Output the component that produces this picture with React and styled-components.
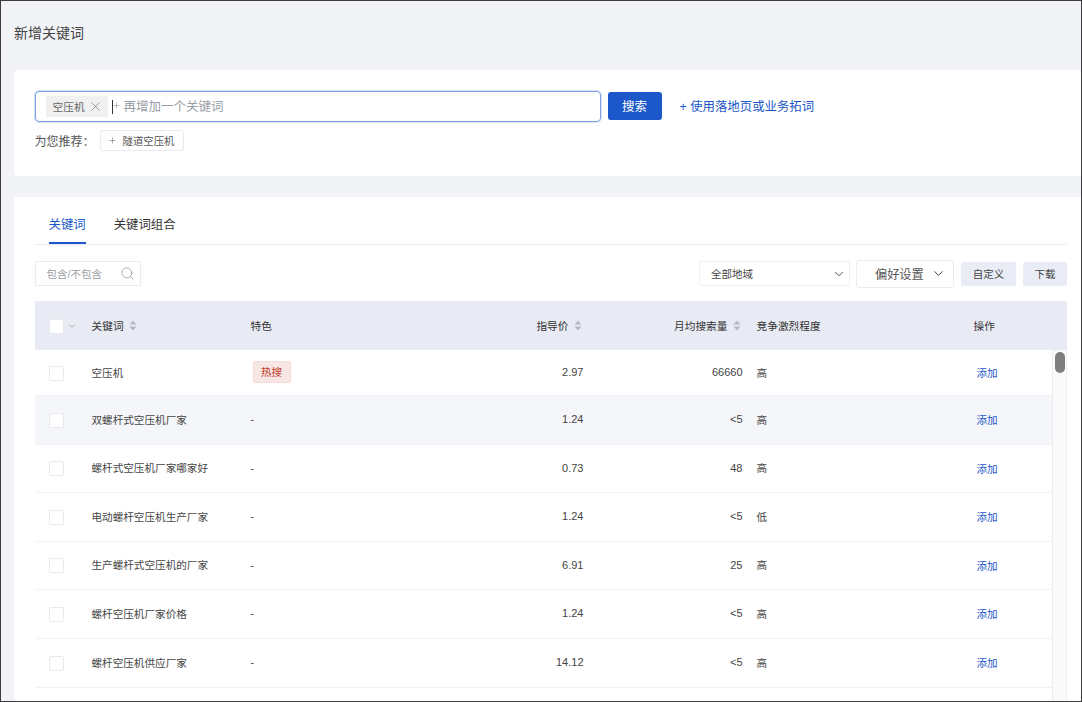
import React from "react";
import styled, { createGlobalStyle } from "styled-components";
import { X, ChevronDown, Search, Plus } from "lucide-react";

const Global = createGlobalStyle`
  html, body { margin: 0; padding: 0; height: 100%; overflow: hidden; }
  body { font-family: "Liberation Sans", "Noto Sans CJK SC", sans-serif; color: #333; }
  * { box-sizing: border-box; }
`;

const Frame = styled.div`
  width: 1082px; height: 702px; overflow: hidden; background: #f1f3f7;
  border: 1px solid #3c3c3e; border-left-width: 1.5px;
  display: flex; flex-direction: column; padding-left: 12.5px;
`;
const Title = styled.h1`
  margin: 0; height: 69px; padding: 22px 0 0 0.5px; font-size: 14px; line-height: 20px; font-weight: 400; color: #444;
`;
const Card = styled.section`
  background: #fff; border-radius: 4px 0 0 4px; padding-left: 21px;
`;
const SearchCard = styled(Card)`
  height: 106px; padding-top: 21px; margin-bottom: 21px;
`;
const SearchRow = styled.div`display: flex; align-items: center; height: 31px;`;
const InputBox = styled.div`
  width: 566px; height: 31px; border: 1px solid #7d9ce6; border-radius: 4px; box-shadow: 0 0 0 1px #dde6f9;
  display: flex; align-items: center; padding-left: 10px;
`;
const Tag = styled.span`
  width: 62px; height: 21px; background: #f0f0f1; display: flex; align-items: center; gap: 3px;
  padding-left: 7px; font-size: 10.7px; color: #666; flex: none;
  svg { color: #666; }
`;
const Caret = styled.span`width: 1px; height: 14px; background: #333; margin-left: 4px; flex: none;`;
const Placeholder = styled.span`
  font-size: 12.5px; color: #9a9ea6; display: flex; align-items: center; gap: 3px; margin-left: -1px; position: relative; top: -1px;
  svg { color: #777; }
`;
const PrimaryButton = styled.button`
  width: 54px; height: 28px; margin-left: 7px; border: 0; border-radius: 3px; background: #1c58c9; color: #fff;
  font: inherit; font-size: 12.5px; padding: 0; position: relative; top: -1px;
`;
const LinkText = styled.a`margin-left: 18px; font-size: 12.4px; color: #1c58c9; position: relative; top: -1px;`;
const RecommendRow = styled.div`display: flex; align-items: center; height: 21px; margin-top: 8px; font-size: 12px; color: #555;`;
const Chip = styled.span`
  width: 84px; height: 21px; margin-left: 5px; border: 1px solid #e8eaf1; border-radius: 3px; display: flex; align-items: center;
  padding-left: 7px; gap: 6px; font-size: 10.4px; color: #555;
`;

const MainCard = styled(Card)`flex: 1; padding-right: 14px; min-height: 0;`;
const Tabs = styled.div`height: 48px; border-bottom: 1px solid #e7eaf1; display: flex; padding-left: 14px; gap: 28px;`;
const Tab = styled.div`
  height: 47px; padding-top: 19px; font-size: 12.4px; line-height: 18px;
  color: ${p => (p.$active ? "#1c58c9" : "#333")};
  border-bottom: 2px solid ${p => (p.$active ? "#1c58c9" : "transparent")};
`;
const Toolbar = styled.div`height: 56px; display: flex; align-items: center; padding-top: 1px;`;
const FilterBox = styled.div`
  width: 106px; height: 25px; border: 1px solid #e9ebf2; display: flex; align-items: center; justify-content: space-between;
  padding: 0 5px 0 11px; font-size: 10.5px; color: #9a9ea6;
  svg { color: #8d9198; }
`;
const Spacer = styled.div`flex: 1;`;
const SelectBox = styled.div`
  width: 151px; height: 25px; border: 1px solid #eef0f5; border-radius: 2px; display: flex; align-items: center; justify-content: space-between;
  padding: 0 3px 0 11px; font-size: 10.5px; color: #444;
  svg { color: #333; }
`;
const PrefButton = styled.div`
  width: 98px; height: 28px; margin-left: 6px; border: 1px solid #eaecf2; border-radius: 3px; display: flex; align-items: center;
  padding-left: 18px; gap: 7px; font-size: 12.2px; color: #555;
  svg { color: #333; }
`;
const SoftButton = styled.div`
  width: ${p => p.$w}px; height: 24px; margin-left: ${p => p.$ml}px; background: #e9ecf4; border-radius: 2px;
  display: flex; align-items: center; justify-content: center; font-size: 10.5px; color: #444;
`;

const grid = `display: grid; grid-template-columns: 57px 159px 149px 184px 159px 231px 1fr; align-items: center;`;
const HeadRow = styled.div`
  ${grid} height: 49px; background: #e8ebf3; font-size: 10.7px; color: #333; border-radius: 2px 2px 0 0;
`;
const HeadCell = styled.div`
  display: flex; align-items: center; gap: 5px;
  justify-content: ${p => (p.$right ? "flex-end" : "flex-start")};
  padding-left: ${p => (p.$pl ? p.$pl : 0)}px;
  padding-right: ${p => (p.$right ? 2 : 0)}px;
`;
const CheckCell = styled.div`display: flex; align-items: center; padding-left: 14px; gap: 3px; svg { color: #6f737a; }`;
const HeadCheckCell = styled(CheckCell)`padding-top: 1px;`;
const Check = styled.span`
  display: block; width: 15px; height: 15px; border: 1px solid #e8eaf1; border-radius: 2px; background: #fff;
`;
const BodyWrap = styled.div`display: flex; height: 400px;`;
const Rows = styled.div`flex: 1; min-width: 0; padding-top: 1px;`;
const Row = styled.div`
  ${grid} height: ${p => p.$h}px; font-size: 10.6px; color: #444;
  background: ${p => (p.$hover ? "#f5f6fa" : "#fff")};
  border-bottom: 1px solid #f1f2f5;
`;
const Cell = styled.div`padding-bottom: 2px;`;
const Right = styled(Cell)`text-align: right; font-size: 11px;`;
const Comp = styled(Cell)`padding-left: 14px;`;
const Add = styled.a`padding-left: 3px; color: #1c58c9; padding-bottom: 1px;`;
const HotBadge = styled.span`
  display: inline-block; width: 38px; height: 22px; margin-left: 2px; line-height: 21px; text-align: center;
  background: #f8e6e4; border: 1px solid #f3dedb; border-radius: 2px; color: #c0392b; font-size: 10.5px;
`;
const Track = styled.div`
  width: 15px; flex: none; background: #fafafa; border-left: 1px solid #ededed; border-right: 1px solid #f0f0f0; padding: 2px 0 0 2px;
`;
const Thumb = styled.div`width: 10px; height: 21px; background: #7f7f7f; border-radius: 5px;`;

const Sort = () => (
  <svg width="8" height="11" viewBox="0 0 8 11" fill="#b4b9c6"><path d="M4 0.5 7.5 4.5H.5zM4 10.5 .5 6.5h7z" /></svg>
);

const rows = [
  ["空压机", true, "2.97", "66660", "高", 45],
  ["双螺杆式空压机厂家", false, "1.24", "<5", "高", 49],
  ["螺杆式空压机厂家哪家好", false, "0.73", "48", "高", 48],
  ["电动螺杆空压机生产厂家", false, "1.24", "<5", "低", 49],
  ["生产螺杆式空压机的厂家", false, "6.91", "25", "高", 48],
  ["螺杆空压机厂家价格", false, "1.24", "<5", "高", 49],
  ["螺杆空压机供应厂家", false, "14.12", "<5", "高", 49],
];

export default function App() {
  return (
    <Frame>
      <Global />
      <Title>新增关键词</Title>
      <SearchCard>
        <SearchRow>
          <InputBox>
            <Tag>空压机<X size={15} strokeWidth={1} /></Tag>
            <Caret />
            <Placeholder><Plus size={9} strokeWidth={1.3} />再增加一个关键词</Placeholder>
          </InputBox>
          <PrimaryButton>搜索</PrimaryButton>
          <LinkText>+ 使用落地页或业务拓词</LinkText>
        </SearchRow>
        <RecommendRow>
          为您推荐：
          <Chip><Plus size={9} strokeWidth={1.3} />隧道空压机</Chip>
        </RecommendRow>
      </SearchCard>
      <MainCard>
        <Tabs>
          <Tab $active>关键词</Tab>
          <Tab>关键词组合</Tab>
        </Tabs>
        <Toolbar>
          <FilterBox>包含/不包含<Search size={15} strokeWidth={1.2} /></FilterBox>
          <Spacer />
          <SelectBox>全部地域<ChevronDown size={14} strokeWidth={1.5} /></SelectBox>
          <PrefButton>偏好设置<ChevronDown size={15} strokeWidth={1.5} /></PrefButton>
          <SoftButton $w={55} $ml={7}>自定义</SoftButton>
          <SoftButton $w={44} $ml={7}>下载</SoftButton>
        </Toolbar>
        <HeadRow>
          <HeadCheckCell><Check /><ChevronDown size={10} strokeWidth={1.3} /></HeadCheckCell>
          <HeadCell>关键词<Sort /></HeadCell>
          <HeadCell>特色</HeadCell>
          <HeadCell $right>指导价<Sort /></HeadCell>
          <HeadCell $right>月均搜索量<Sort /></HeadCell>
          <HeadCell $pl={14}>竞争激烈程度</HeadCell>
          <HeadCell>操作</HeadCell>
        </HeadRow>
        <BodyWrap>
          <Rows>
            {rows.map((r, i) => (
              <Row key={r[0]} $h={r[5]} $hover={i === 1}>
                <CheckCell><Check /></CheckCell>
                <Cell>{r[0]}</Cell>
                <Cell>{r[1] ? <HotBadge>热搜</HotBadge> : "-"}</Cell>
                <Right>{r[2]}</Right>
                <Right>{r[3]}</Right>
                <Comp>{r[4]}</Comp>
                <Add>添加</Add>
              </Row>
            ))}
          </Rows>
          <Track><Thumb /></Track>
        </BodyWrap>
      </MainCard>
    </Frame>
  );
}
